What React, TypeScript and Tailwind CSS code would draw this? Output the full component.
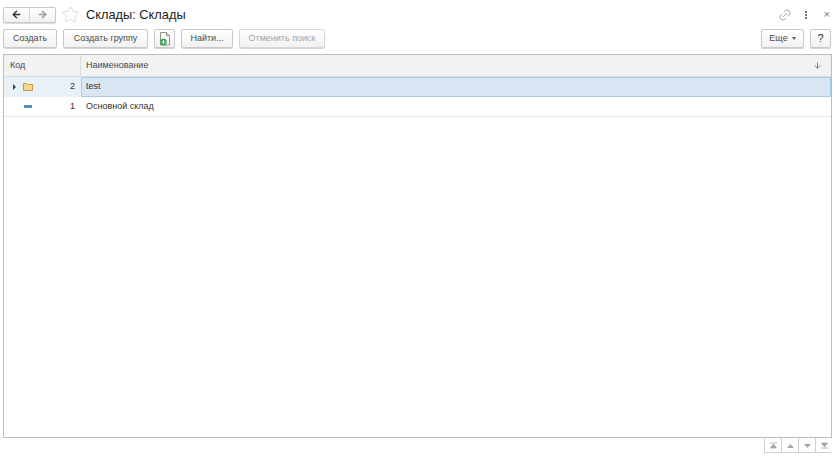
import React from 'react';
import { ArrowLeft, ArrowRight, Star, Link2, ArrowDown } from 'lucide-react';

function Button({ children, className = '' }: { children: React.ReactNode; className?: string }) {
  return (
    <button className={`h-[19px] rounded-[2px] border border-[#c9c9c9] bg-gradient-to-b from-white to-[#f1f1f1] shadow-[0_1px_1px_rgba(0,0,0,0.18)] text-[9px] text-[#4a4a4a] flex items-center justify-center ${className}`}>
      {children}
    </button>
  );
}

function PagerButton({ children }: { children: React.ReactNode }) {
  return <div className="w-[17px] h-[15px] border-l border-[#d0d0d0] flex items-center justify-center">{children}</div>;
}

export default function App() {
  return (
    <div className="w-[838px] h-[457px] bg-white overflow-hidden flex flex-col font-['Liberation_Sans',sans-serif]">
      {/* Header */}
      <div className="h-[29px] pl-[3px] pr-[8px] flex items-center shrink-0">
        <div className="flex h-[16px] w-[53px] rounded-[2px] border border-[#c9c9c9] bg-gradient-to-b from-white to-[#f1f1f1] shadow-[0_1px_1px_rgba(0,0,0,0.15)]">
          <div className="w-[26px] flex items-center justify-center border-r border-[#d8d8d8]">
            <ArrowLeft className="w-[11px] h-[11px] text-[#333]" strokeWidth={3} />
          </div>
          <div className="flex-1 flex items-center justify-center">
            <ArrowRight className="w-[11px] h-[11px] text-[#9a9a9a]" strokeWidth={3} />
          </div>
        </div>
        <Star className="ml-[5px] w-[19px] h-[19px] text-[#d0d0d0]" strokeWidth={1} />
        <span className="ml-[6px] text-[12.8px] text-[#222]">Склады: Склады</span>
        <div className="ml-auto flex items-center">
          <Link2 className="w-[14px] h-[14px] text-[#8a8a8a] -rotate-45" strokeWidth={1.2} />
          <div className="ml-[13px] flex flex-col gap-[1px]">
            <div className="w-[2px] h-[2px] bg-[#777]" />
            <div className="w-[2px] h-[2px] bg-[#777]" />
            <div className="w-[2px] h-[2px] bg-[#777]" />
          </div>
          <span className="ml-[17px] text-[11px] leading-none text-[#777]">×</span>
        </div>
      </div>

      {/* Toolbar */}
      <div className="h-[19px] pl-[3px] pr-[7px] flex items-center shrink-0">
        <Button className="w-[54px]">Создать</Button>
        <Button className="w-[85px] ml-[6px]">Создать группу</Button>
        <Button className="w-[21px] ml-[6px]">
          <svg width="12" height="14" viewBox="0 0 12 14">
            <path d="M1.500 .5h6l3 3v9.500h-9z" fill="#f4f7f4" stroke="#8a9a8a" />
            <path d="M7.500 .5v3h3" fill="#dfe7df" stroke="#8a9a8a" />
            <circle cx="4.500" cy="10" r="3.200" fill="#2f9e44" />
            <path d="M4.500 8v4M2.500 10h4" stroke="#fff" strokeWidth="1" />
          </svg>
        </Button>
        <Button className="w-[52px] ml-[6px]">Найти...</Button>
        <Button className="w-[86px] ml-[6px] text-[#a3a3a3] border-[#d8d8d8]">Отменить поиск</Button>
        <Button className="w-[43px] ml-auto">
          Еще
          <span className="ml-[4px] w-0 h-0 border-x-[2.500px] border-x-transparent border-t-[3px] border-t-[#555]" />
        </Button>
        <Button className="w-[21px] ml-[6px] text-[11px] text-[#333]">?</Button>
      </div>

      {/* Table */}
      <div className="mt-[6px] mx-[3px] h-[384px] w-[829px] border border-[#bdbdbd] flex flex-col shrink-0 overflow-hidden">
        <div className="h-[22px] bg-[#f2f2f2] border-b border-[#dcdcdc] flex text-[9px] text-[#4a4a4a] shrink-0">
          <div className="w-[77px] pl-[6px] flex items-center border-r border-[#dcdcdc]">Код</div>
          <div className="flex-1 pl-[5px] pr-[9px] flex items-center justify-between">
            Наименование
            <ArrowDown className="w-[9px] h-[9px] text-[#333]" strokeWidth={1.5} />
          </div>
        </div>
        <div className="h-[20px] flex text-[9px] text-[#333] bg-[#e9f1f8] shrink-0">
          <div className="w-[77px] flex items-center relative">
            <span className="ml-[9px] w-0 h-0 border-y-[3px] border-y-transparent border-l-[3px] border-l-[#444]" />
            <svg className="ml-[7px]" width="10" height="8" viewBox="0 0 10 8">
              <path d="M.5 7.500v-7h3l1 1h5v6z" fill="#f6d88a" stroke="#c9973a" />
            </svg>
            <span className="absolute right-[6px]">2</span>
          </div>
          <div className="flex-1 pl-[4px] flex items-center bg-[#d8e7f3] border border-[#a9cde6]">test</div>
        </div>
        <div className="h-[20px] flex text-[9px] text-[#333] border-b border-[#e8e8e8] shrink-0">
          <div className="w-[77px] flex items-center relative">
            <div className="ml-[20px] w-[8px] h-[3px] bg-[#5b8fc0]" />
            <span className="absolute right-[6px]">1</span>
          </div>
          <div className="flex-1 pl-[5px] flex items-center">Основной склад</div>
        </div>
      </div>

      {/* Pager */}
      <div className="h-[15px] pr-[6px] flex justify-end shrink-0">
        <div className="flex border-b border-[#d0d0d0]">
          <PagerButton>
            <svg width="9" height="7" viewBox="0 0 9 7"><path d="M1 1h7M4.500 2l3 4h-6z" fill="#a5a5a5" stroke="#a5a5a5" strokeWidth=".8" /></svg>
          </PagerButton>
          <PagerButton>
            <svg width="9" height="6" viewBox="0 0 9 6"><path d="M4.500 1l3.500 4h-7z" fill="#a5a5a5" /></svg>
          </PagerButton>
          <PagerButton>
            <svg width="9" height="6" viewBox="0 0 9 6"><path d="M4.500 5l3.500-4h-7z" fill="#a5a5a5" /></svg>
          </PagerButton>
          <PagerButton>
            <svg width="9" height="7" viewBox="0 0 9 7"><path d="M1 6h7M4.500 5l3-4h-6z" fill="#a5a5a5" stroke="#a5a5a5" strokeWidth=".8" /></svg>
          </PagerButton>
        </div>
      </div>
    </div>
  );
}
